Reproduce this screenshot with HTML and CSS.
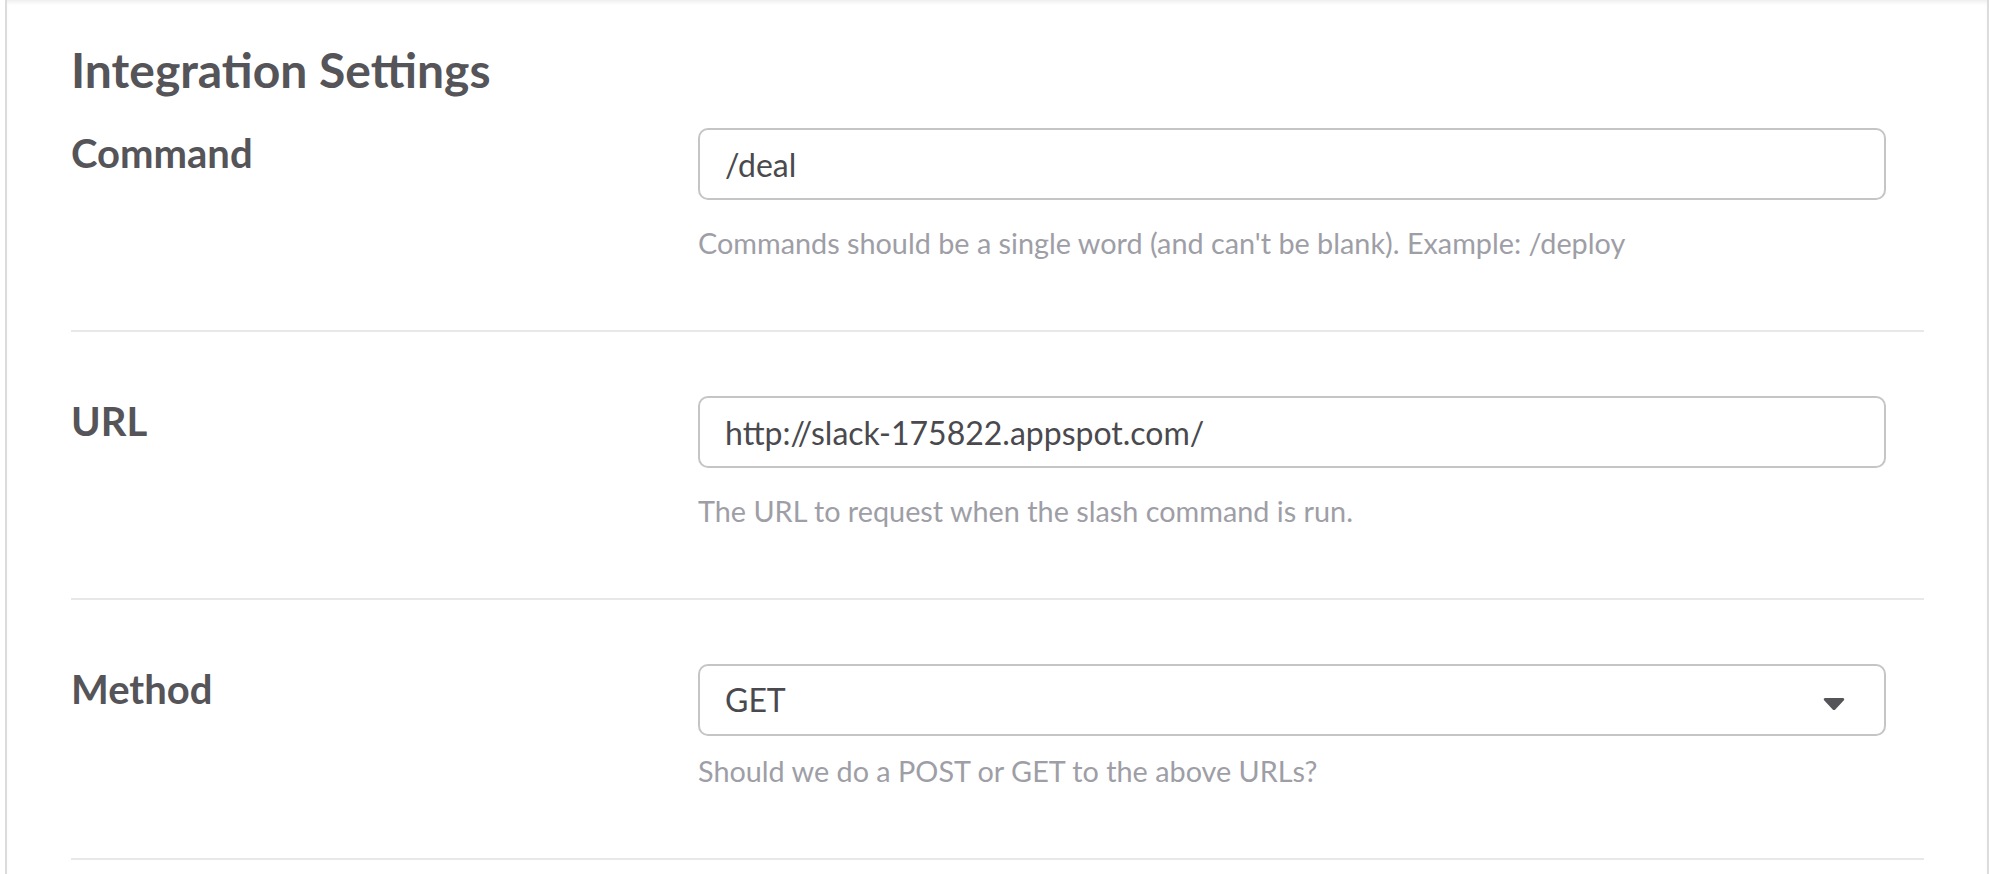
FILE: index.html
```html
<!DOCTYPE html>
<html lang="en">
<head>
<meta charset="utf-8">
<title>Integration Settings</title>
<link rel="stylesheet" href="styles.css">
</head>
<body>
<div class="card">
  <h2 class="title">Integration Settings</h2>

  <div class="row">
    <label class="label" for="cmd">Command</label>
    <div class="field">
      <input class="input" id="cmd" type="text" value="/deal">
      <p class="help">Commands should be a single word (and can't be blank). Example: /deploy</p>
    </div>
  </div>

  <div class="row">
    <label class="label" for="url">URL</label>
    <div class="field">
      <input class="input" id="url" type="text" value="http://slack-175822.appspot.com/">
      <p class="help">The URL to request when the slash command is run.</p>
    </div>
  </div>

  <div class="row">
    <label class="label" for="method">Method</label>
    <div class="field">
      <div class="select-wrap">
        <div class="select" id="method">GET</div>
        <svg class="caret" width="22" height="14" viewBox="0 0 22 14" aria-hidden="true">
          <path d="M2.2 1h17.6c1.3 0 1.9 1.4 1.1 2.3l-8.6 9.2c-.7.8-1.9.8-2.6 0L1.1 3.3C.3 2.4.9 1 2.2 1z" fill="#555459"/>
        </svg>
      </div>
      <p class="help help-select">Should we do a POST or GET to the above URLs?</p>
    </div>
  </div>
</div>
</body>
</html>
```

FILE: styles.css
```css
* {
  box-sizing: border-box;
}

html, body {
  margin: 0;
  padding: 0;
  background: #ffffff;
}

body {
  font-family: Lato, "Liberation Sans", sans-serif;
  color: #555459;
  overflow: hidden;
}

.card {
  margin: 0 1px 0 5px;
  min-height: 100vh;
  border-left: 2px solid #dcdcdc;
  border-right: 2px solid #dcdcdc;
  padding: 0 63px 0 64px;
  box-shadow: inset 0 4px 4px -2px rgba(0, 0, 0, 0.08);
}

.title {
  margin: 0 0 29px;
  padding-top: 41px;
  font-size: 48px;
  line-height: 58px;
  font-weight: 700;
  color: #555459;
}

.row {
  display: grid;
  grid-template-columns: 627px 1188px;
  padding: 64px 0 70px;
  border-bottom: 2px solid #e8e8e8;
}

.row:first-of-type {
  padding-top: 0;
}

.label {
  font-size: 40px;
  line-height: 50px;
  font-weight: 700;
  color: #555459;
}

.field {
  display: flex;
  flex-direction: column;
}

.input,
.select {
  display: block;
  width: 100%;
  height: 72px;
  margin: 0;
  padding: 0 25px;
  border: 2px solid #c5c5c5;
  border-radius: 10px;
  background: #ffffff;
  font-family: Lato, "Liberation Sans", sans-serif;
  font-size: 32px;
  line-height: 68px;
  color: #4a494e;
  outline: none;
}

.select-wrap {
  position: relative;
}

.caret {
  position: absolute;
  right: 41px;
  top: 33px;
}

.help {
  margin: 26px 0 0;
  font-size: 28.8px;
  line-height: 34px;
  color: #9e9ea6;
}

.help-select {
  margin-top: 18px;
}
```
